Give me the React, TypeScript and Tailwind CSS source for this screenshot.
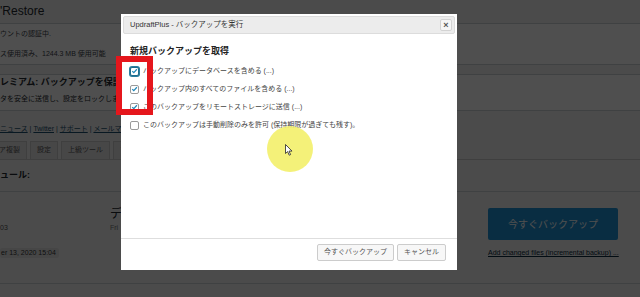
import React from "react";

const font = "font-['Liberation_Sans','Noto_Sans_CJK_JP',sans-serif]";

const options = [
  { label: "バックアップにデータベースを含める (...)", checked: true, focus: true },
  { label: "バックアップ内のすべてのファイルを含める (...)", checked: true },
  { label: "このバックアップをリモートストレージに送信 (...)", checked: true },
  { label: "このバックアップは手動削除のみを許可 (保持期限が過ぎても残す)。", checked: false },
];

function Check({ checked, focus }: { checked: boolean; focus?: boolean }) {
  return (
    <span
      className={`flex h-[9px] w-[9px] shrink-0 items-center justify-center rounded-[2px] border bg-white ${
        focus ? "border-[#1f6d8c] shadow-[0_0_0_1px_#2a7ea0]" : "border-[#9a9a9a]"
      }`}
    >
      {checked && (
        <svg viewBox="0 0 10 10" className="h-[8px] w-[8px]">
          <path d="M1.8 5.1 L4 7.3 L8.4 2.5" fill="none" stroke="#1e86b8" strokeWidth="1.7" />
        </svg>
      )}
    </span>
  );
}

function Tab({ children }: { children: React.ReactNode }) {
  return (
    <div className="flex h-[18px] items-center border border-b-0 border-[#ccc] bg-[#e5e5e5] px-[6px] text-[7px] text-[#555]">
      {children}
    </div>
  );
}

export default function App() {
  return (
    <div className={`relative h-[297px] w-[640px] overflow-hidden bg-[#f1f1f1] ${font}`}>
      {/* page behind the dialog */}
      <div className="flex flex-col">
        <h1 className="h-[23px] pt-[4px] text-[12px] leading-[14px] text-[#23282d]">'Restore</h1>

        <div className="h-[42px] border-y border-[#ccd0d4] bg-white pt-[5px] text-[7px] leading-[10px] text-[#3c434a]">
          <p>ウントの認証中.</p>
          <p className="mt-[10px]">ス使用済み、1244.3 MB 使用可能</p>
        </div>

        <div className="mt-[9px] h-[37px] border-y border-[#ccd0d4] bg-white pt-[1px] text-[#23282d]">
          <p className="whitespace-nowrap text-[9px] font-bold leading-[12px]">レミアム: バックアップを保護しましょう</p>
          <p className="mt-[6px] whitespace-nowrap text-[7px] leading-[10px]">タを安全に送信し、設定をロックしましょう</p>
        </div>

        <p className="mt-[13px] whitespace-nowrap text-[7px] leading-[10px] text-[#1a4f6e]">
          <span className="underline">ニュース</span> | <span className="underline">Twitter</span> |{" "}
          <span className="underline">サポート</span> | <span className="underline">メールマガジン</span>
        </p>

        <div className="mt-[7px] flex items-end gap-[3px] border-b border-[#ccc]">
          <div className="-ml-[8px]">
            <Tab>ア複製</Tab>
          </div>
          <Tab>設定</Tab>
          <Tab>上級ツール</Tab>
          <Tab>プレミアム</Tab>
        </div>

        <h2 className="mt-[9px] h-[12px] text-[9px] font-bold leading-[12px] text-[#23282d]">ュール:</h2>

        <div className="mt-[10px] flex h-[93px] border-y border-[#ccd0d4] pr-[22px]">
          <div className="w-[110px] pt-[31px] text-[7px] leading-[10px] text-[#555]">
            <p>03</p>
            <p className="mt-[15px] w-[59px] rounded-[2px] bg-[#e3e3e3] pl-[1px] text-[#333]">er 13, 2020 15:04</p>
          </div>
          <div className="flex-1 pt-[15px]">
            <p className="text-[12px] leading-[14px] text-[#23282d]">デ</p>
            <p className="mt-[2px] text-[7px] leading-[10px] text-[#777]">Fri</p>
          </div>
          <div className="flex w-[130px] flex-col pt-[16px]">
            <div className="flex h-[32px] items-center justify-center rounded-[2px] bg-[#1f92d4] text-[10px] text-white">
              今すぐバックアップ
            </div>
            <p className="mt-[8px] whitespace-nowrap text-[7px] leading-[10px] text-[#0b2a3d] underline">
              Add changed files (incremental backup) ...
            </p>
          </div>
        </div>
      </div>

      {/* overlay */}
      <div className="absolute inset-0 bg-black/[0.69]" />

      {/* dialog */}
      <div className="absolute left-[121px] top-[14px] flex h-[256px] w-[336px] flex-col bg-white p-[2px]">
        <div className="flex h-[18px] items-center justify-between rounded-[2px] border border-[#dcdcdc] bg-[#ececec] pl-[6px] pr-[2px]">
          <span className="text-[7.5px] text-[#333]">UpdraftPlus - バックアップを実行</span>
          <span className="flex h-[12px] w-[12px] items-center justify-center rounded-[2px] border border-[#d3d3d3] bg-[#f6f6f6] text-[9px] font-bold leading-none text-[#555]">
            ×
          </span>
        </div>
        <div className="flex-1 px-[7px] pt-[11px]">
          <h3 className="text-[9px] font-bold leading-[12px] text-[#222]">新規バックアップを取得</h3>
          <div className="mt-[5px] flex flex-col">
            {options.map((o) => (
              <label key={o.label} className="flex h-[18px] items-center gap-[4px] text-[7px] text-[#444]">
                <Check checked={o.checked} focus={o.focus} />
                <span className="whitespace-nowrap">{o.label}</span>
              </label>
            ))}
          </div>
        </div>
        <div className="-mx-[2px] flex justify-end gap-[3px] border-t border-[#dedede] pb-[7px] pr-[11px] pt-[5px]">
          <button className="h-[17px] rounded-[2px] border border-[#ccc] bg-[#f7f7f7] px-[6px] text-[7px] text-[#555]">
            今すぐバックアップ
          </button>
          <button className="h-[17px] rounded-[2px] border border-[#ccc] bg-[#f7f7f7] px-[6px] text-[7px] text-[#555]">
            キャンセル
          </button>
        </div>
      </div>

      {/* red highlight box */}
      <div className="absolute left-[116px] top-[56px] h-[59px] w-[37px] border-[6px] border-[#e5161c]" />

      {/* cursor highlight */}
      <div className="absolute left-[267px] top-[126px] h-[46px] w-[46px] rounded-full bg-[#f3f06a]/90" />
      <svg className="absolute left-[285px] top-[144px]" width="8" height="12" viewBox="0 0 8 12">
        <path d="M0.5 0.5 L0.5 9.5 L2.6 7.6 L4.2 11.2 L5.6 10.6 L4 7.1 L7 7.1 Z" fill="white" stroke="#222" strokeWidth="0.8" />
      </svg>
    </div>
  );
}
